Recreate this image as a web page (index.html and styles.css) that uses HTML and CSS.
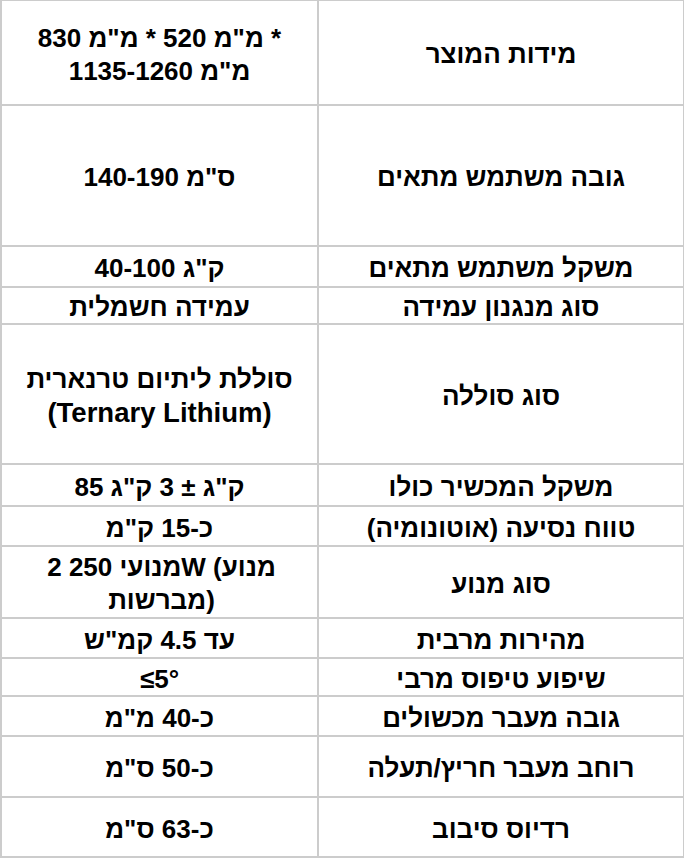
FILE: index.html
```html
<!DOCTYPE html>
<html lang="he" dir="rtl">
<head>
<meta charset="utf-8">
<title>מפרט</title>
<link rel="stylesheet" href="styles.css">
</head>
<body>
<table class="spec">
  <tbody>
    <tr><td class="label">מידות המוצר</td><td class="value multi">* מ"מ 520 * מ"מ 830<br>מ"מ 1135-1260</td></tr>
    <tr><td class="label">גובה משתמש מתאים</td><td class="value">ס"מ 140-190</td></tr>
    <tr><td class="label">משקל משתמש מתאים</td><td class="value">ק"ג 40-100</td></tr>
    <tr><td class="label">סוג מנגנון עמידה</td><td class="value">עמידה חשמלית</td></tr>
    <tr><td class="label">סוג סוללה</td><td class="value multi">סוללת ליתיום טרנארית<br><span class="latin">(Ternary Lithium)</span></td></tr>
    <tr><td class="label">משקל המכשיר כולו</td><td class="value">ק"ג ± 3 ק"ג 85</td></tr>
    <tr><td class="label">טווח נסיעה (אוטונומיה)</td><td class="value">כ-15 ק"מ</td></tr>
    <tr><td class="label">סוג מנוע</td><td class="value multi ltr">2 מנועי 250W (מנוע<br>מברשות)</td></tr>
    <tr><td class="label">מהירות מרבית</td><td class="value">עד 4.5 קמ"ש</td></tr>
    <tr><td class="label">שיפוע טיפוס מרבי</td><td class="value">5°≥</td></tr>
    <tr><td class="label">גובה מעבר מכשולים</td><td class="value">כ-40 מ"מ</td></tr>
    <tr><td class="label">רוחב מעבר חריץ/תעלה</td><td class="value">כ-50 ס"מ</td></tr>
    <tr><td class="label">רדיוס סיבוב</td><td class="value">כ-63 ס"מ</td></tr>
  </tbody>
</table>
</body>
</html>
```
FILE: styles.css
```css
html, body {
  margin: 0;
  padding: 0;
  background: #fff;
}

.spec {
  direction: rtl;
  border-collapse: separate;
  border-spacing: 0;
  table-layout: fixed;
  width: 685px;
  margin: -1px -1px 0 0;
  border-top: 2px solid #cccccc;
  border-left: 2px solid #cccccc;
  font-family: "Liberation Sans", Arial, sans-serif;
  font-weight: bold;
  font-size: 26px;
  line-height: 31px;
  color: #000;
}

.spec td {
  box-sizing: border-box;
  padding: 4px 4px 0;
  text-align: center;
  vertical-align: middle;
  border-right: 2px solid #cccccc;
  border-bottom: 2px solid #cccccc;
}

.spec td.multi { line-height: 33px; }
.spec td.label { width: 366px; }
.spec td.value { width: 317px; }
.spec td.ltr { direction: ltr; }
.spec .latin { font-size: 27.5px; }

.spec tr:nth-child(1) td { height: 105px; }
.spec tr:nth-child(2) td { height: 141px; }
.spec tr:nth-child(3) td { height: 41px; }
.spec tr:nth-child(4) td { height: 37px; }
.spec tr:nth-child(5) td { height: 140px; }
.spec tr:nth-child(6) td { height: 42px; }
.spec tr:nth-child(7) td { height: 40px; }
.spec tr:nth-child(8) td { height: 72px; }
.spec tr:nth-child(9) td { height: 40px; }
.spec tr:nth-child(10) td { height: 38px; }
.spec tr:nth-child(11) td { height: 40px; }
.spec tr:nth-child(12) td { height: 61px; }
.spec tr:nth-child(13) td { height: 60px; }
```
